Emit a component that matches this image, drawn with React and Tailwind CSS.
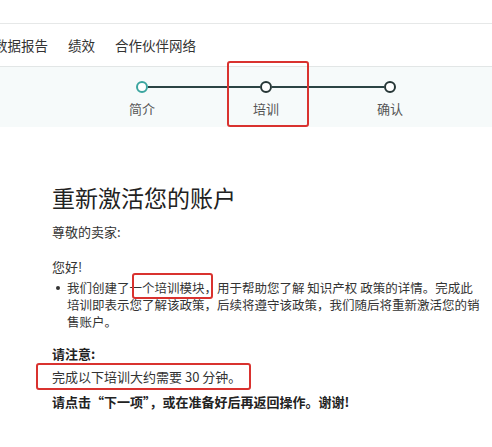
const steps = ["简介", "培训", "确认"];

const Step = ({ label, index, total }) => {
  const first = index === 0;
  const last = index === total - 1;
  return (
    <div className="relative flex flex-col items-center w-[124px]">
      <div className="flex items-center w-full h-[12px]">
        <div className={`flex-1 h-[2px] ${first ? "bg-transparent" : "bg-[#2c4444]"}`} />
        <div
          className={`w-[12px] h-[12px] rounded-full border-2 bg-white ${
            first ? "border-[#3ba59f]" : "border-[#263636]"
          }`}
        />
        <div className={`flex-1 h-[2px] ${last ? "bg-transparent" : "bg-[#2c4444]"}`} />
      </div>
      <span className="mt-[7px] text-[13px] leading-[18px] text-[#555]">{label}</span>
      {index === 1 && (
        <div className="absolute left-[23px] top-[-20px] w-[82px] h-[66px] border-2 border-[#d9322f] rounded-[3px]" />
      )}
    </div>
  );
};

export default function App() {
  return (
    <div
      className="w-[492px] h-[447px] overflow-hidden bg-white text-[#333]"
      style={{ fontFamily: '"Noto Sans CJK SC", "Noto Sans", sans-serif' }}
    >
      {/* top strip */}
      <div className="h-[24px] border-b border-[#e6e8e8]" />

      {/* nav */}
      <div className="h-[43px] border-b border-[#e2e6e6] flex items-center">
        <div className="flex gap-[20px] ml-[-6px] text-[13.5px] text-[#333]">
          <span>数据报告</span>
          <span>绩效</span>
          <span>合作伙伴网络</span>
        </div>
      </div>

      {/* stepper */}
      <div className="h-[60px] bg-[#f6fafa] pt-[14px]">
        <div className="flex ml-[80px]">
          {steps.map((s, i) => (
            <Step key={s} label={s} index={i} total={steps.length} />
          ))}
        </div>
      </div>

      {/* content */}
      <div className="pl-[52px] pt-[55px]">
        <h1 className="text-[23px] leading-[30px] text-[#222]">重新激活您的账户</h1>
        <p className="mt-[11px] text-[13px] leading-[18px]">尊敬的卖家:</p>
        <p className="mt-[17px] text-[13px] leading-[18px]">您好!</p>
        <div className="mt-[3px] flex text-[12.5px] leading-[17px]">
          <span className="w-[15px] pl-[4px] pt-[7px]">
            <span className="block w-[4px] h-[4px] rounded-full bg-[#333]" />
          </span>
          <p className="w-[416px]">
            我们创建了
            <span className="relative">
              一个培训模块，
              <span className="absolute left-[2px] right-[4px] top-[-5px] bottom-[-2px] border-2 border-[#d9322f] rounded-[3px]" />
            </span>
            用于帮助您了解 知识产权 政策的详情。完成此培训即表示您了解该政策，后续将遵守该政策，我们随后将重新激活您的销售账户。
          </p>
        </div>
        <p className="mt-[15px] text-[13px] leading-[18px] font-bold text-[#222]">请注意:</p>
        <p className="relative mt-[5px] text-[13px] leading-[18px]">
          完成以下培训大约需要 30 分钟。
          <span className="absolute left-[-16px] w-[215px] top-[-5px] h-[27px] border-2 border-[#d9322f] rounded-[3px]" />
        </p>
        <p className="mt-[7px] text-[13px] leading-[18px] font-bold text-[#222]">
          请点击“下一项”，或在准备好后再返回操作。谢谢!
        </p>
      </div>
    </div>
  );
}
